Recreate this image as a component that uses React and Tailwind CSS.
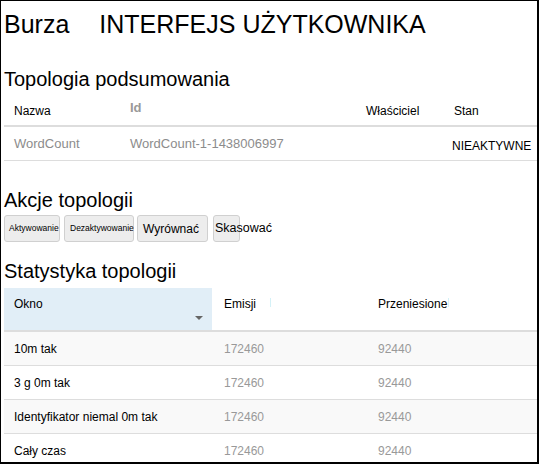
import React from "react";

const statRows = [
  { okno: "10m tak", emisji: "172460", przeniesione: "92440" },
  { okno: "3 g 0m tak", emisji: "172460", przeniesione: "92440" },
  { okno: "Identyfikator niemal 0m tak", emisji: "172460", przeniesione: "92440" },
  { okno: "Cały czas", emisji: "172460", przeniesione: "92440" },
];

const App = () => {
  return (
    <div className="w-[539px] h-[464px] overflow-hidden bg-white border-t border-l border-r-2 border-b-2 border-black pl-[3px] pt-[9px] font-['Liberation_Sans',Arial,sans-serif] text-black">
      <div className="flex text-[25px] leading-[29px]">
        <span>Burza</span>
        <span className="ml-[30px]">INTERFEJS UŻYTKOWNIKA</span>
      </div>

      <h2 className="mt-[29px] text-[20px] leading-[23px]">Topologia podsumowania</h2>
      <div className="grid grid-cols-[116px_236px_86px_1fr] h-[36px] items-end pb-[7px] border-b-2 border-[#dddddd] text-[12px] leading-[14px]">
        <div className="pl-[10px]">Nazwa</div>
        <div className="pl-[10px] mb-[3px] text-[13px] font-bold text-[#999999]">Id</div>
        <div className="pl-[10px]">Właściciel</div>
        <div className="pl-[12px]">Stan</div>
      </div>
      <div className="grid grid-cols-[116px_236px_86px_1fr] h-[34px] items-center border-b border-[#dddddd] text-[13px] leading-[15px]">
        <div className="pl-[10px] text-[#8c8c8c]">WordCount</div>
        <div className="pl-[10px] text-[#8c8c8c]">WordCount-1-1438006997</div>
        <div />
        <div className="pl-[10px] mt-[5px] text-[12px] whitespace-nowrap">NIEAKTYWNE</div>
      </div>

      <h2 className="mt-[28px] text-[20px] leading-[23px]">Akcje topologii</h2>
      <div className="mt-[3px] flex items-center h-[27px]">
        <button className="h-[27px] w-[56px] rounded-[3px] border border-[#d0d0d0] bg-[#ededed] text-[8.5px] pl-[4px] text-left whitespace-nowrap">
          Aktywowanie
        </button>
        <button className="ml-[4px] h-[27px] w-[70px] rounded-[3px] border border-[#d0d0d0] bg-[#ededed] text-[8.5px] pl-[5px] text-left whitespace-nowrap overflow-visible">
          Dezaktywowanie
        </button>
        <button className="ml-[3px] h-[27px] w-[71px] rounded-[3px] border border-[#d0d0d0] bg-[#ededed] text-[12px] pl-[5px] text-left whitespace-nowrap">
          Wyrównać
        </button>
        <button className="ml-[5px] h-[27px] w-[27px] rounded-[3px] border border-[#d0d0d0] bg-[#ededed] text-[12.5px] pl-[1px] text-left whitespace-nowrap overflow-visible">
          Skasować
        </button>
      </div>

      <h2 className="mt-[18px] text-[20px] leading-[23px]">Statystyka topologii</h2>
      <div className="mt-[5px] text-[12px] leading-[14px]">
        <div className="grid grid-cols-[208px_154px_1fr] h-[44px] border-b-2 border-[#dddddd]">
          <div className="relative bg-[#e1eef7] pl-[10px] pt-[9px]">
            Okno
            <svg className="absolute right-[9px] bottom-[10px]" width="8" height="4" viewBox="0 0 8 4">
              <path d="M0 0 L8 0 L4 4 Z" fill="#666666" />
            </svg>
          </div>
          <div className="relative pl-[12px] pt-[9px]">
            Emisji
            <span className="absolute left-[58px] top-[10px] h-[9px] w-px bg-[#d4f1f7]" />
          </div>
          <div className="relative pl-[12px] pt-[9px]">
            Przeniesione
            <span className="absolute left-[82px] top-[10px] h-[9px] w-px bg-[#d4f1f7]" />
          </div>
        </div>
        {statRows.map((row, i) => (
          <div
            key={row.okno}
            className={`grid grid-cols-[208px_154px_1fr] h-[34px] items-center border-b border-[#dddddd] ${
              i % 2 === 0 ? "bg-[#f9f9f9]" : "bg-white"
            }`}
          >
            <div className="pl-[10px] whitespace-nowrap">{row.okno}</div>
            <div className="pl-[12px] text-[#999999]">{row.emisji}</div>
            <div className="pl-[12px] text-[#999999]">{row.przeniesione}</div>
          </div>
        ))}
      </div>
    </div>
  );
};

export default App;
